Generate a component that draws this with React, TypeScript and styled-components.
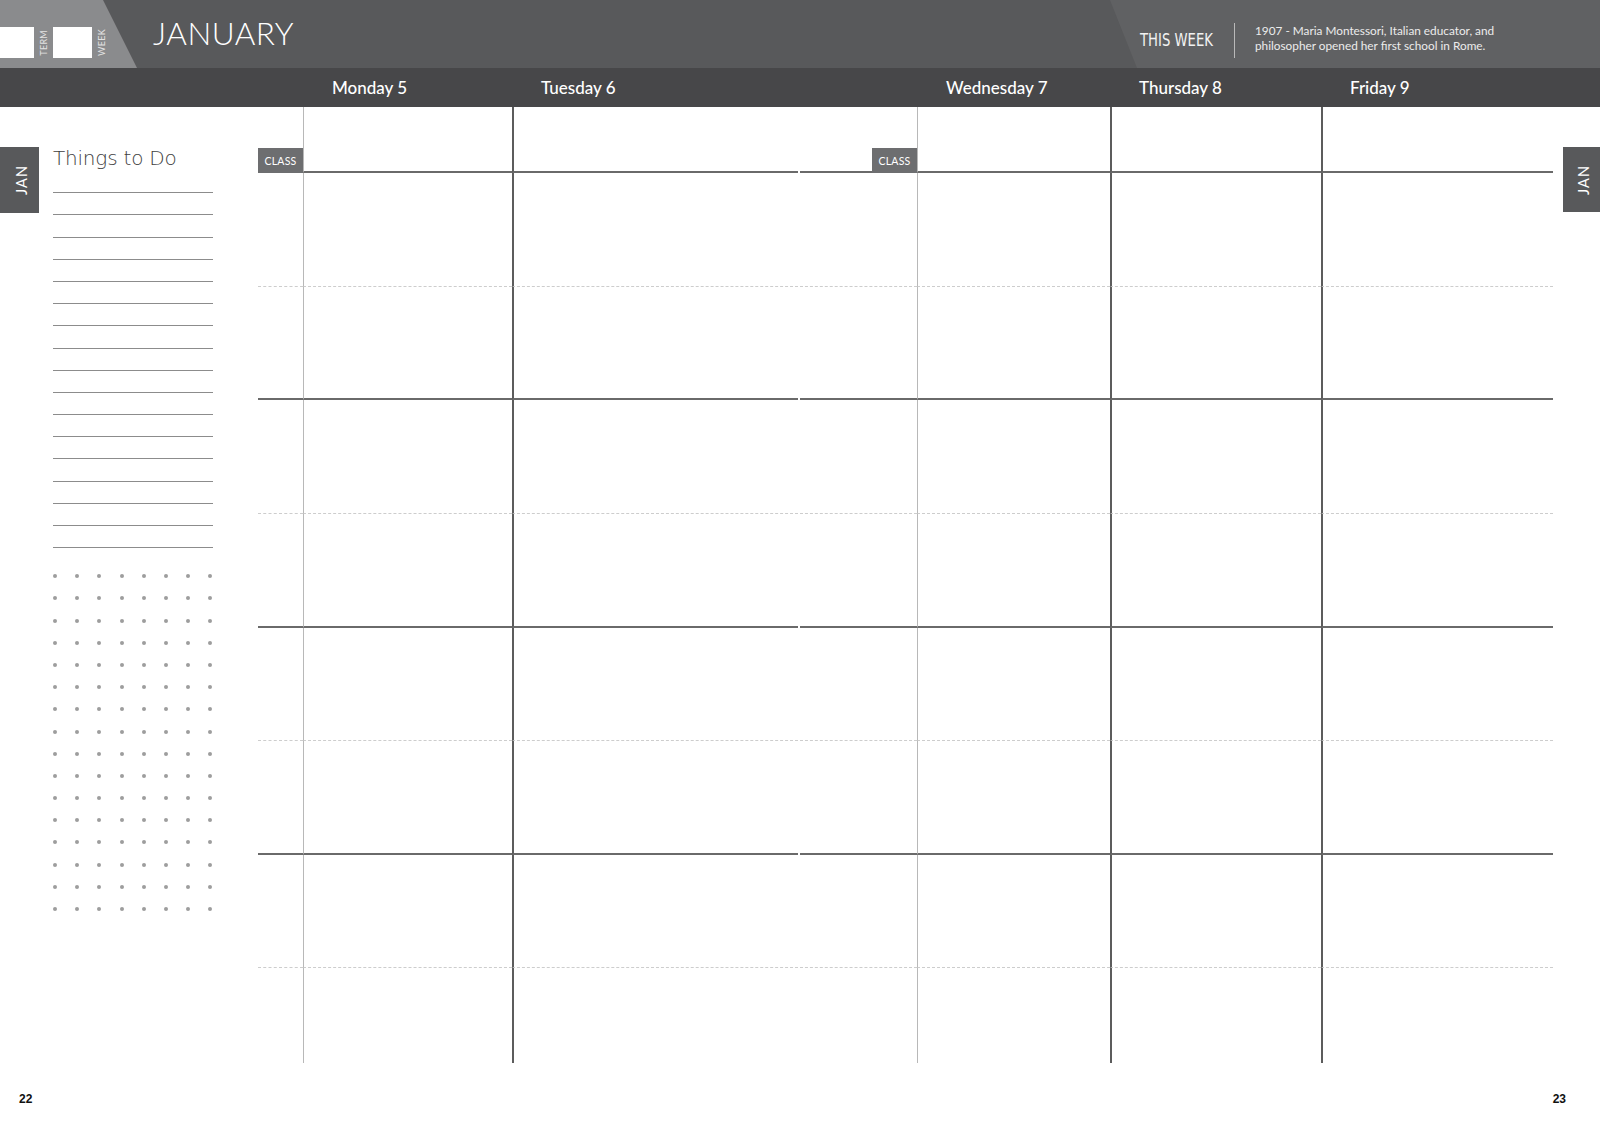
import React from "react";
import styled, { createGlobalStyle } from "styled-components";

const COLS = "45px 209px 286px 2px 117px 193px 211px 232px";
const ROWS = [66, 114, 113, 114, 114, 113, 114, 113, 95];

type Line = "none" | "light" | "dark";
type Rule = "none" | "dotted" | "solid";

const colLines: Line[] = ["none", "light", "dark", "none", "none", "light", "dark", "dark"];

const days = [
  { label: "Monday 5", col: 2 },
  { label: "Tuesday 6", col: 3 },
  { label: "Wednesday 7", col: 6 },
  { label: "Thursday 8", col: 7 },
  { label: "Friday 9", col: 8 },
];

const GlobalStyle = createGlobalStyle`
  body {
    margin: 0;
    background: #fff;
    font-family: Lato, "Open Sans", sans-serif;
  }
`;

const Page = styled.div`
  width: 1600px;
  height: 1129px;
  display: flex;
  flex-direction: column;
  background: #fff;
  overflow: hidden;
`;

const TopBar = styled.header`
  height: 68px;
  display: flex;
  align-items: center;
  background: #58595b;
`;

const TermBlock = styled.div`
  width: 137px;
  height: 100%;
  align-self: stretch;
  display: flex;
  align-items: flex-end;
  padding-bottom: 10px;
  box-sizing: border-box;
  background: #8a8b8d;
  clip-path: polygon(0 0, 103px 0, 137px 100%, 0 100%);
`;

const WhiteBox = styled.div<{ $w: number }>`
  width: ${(p) => p.$w}px;
  height: 31px;
  background: #fff;
`;

const SideLabel = styled.span`
  writing-mode: vertical-rl;
  transform: rotate(180deg);
  font-size: 9px;
  letter-spacing: 0.3px;
  color: #e2e2e2;
  margin: 0 5px 2px 5px;
  line-height: 9px;
`;

const Title = styled.h1`
  margin: -2px 0 0 16px;
  font-weight: 300;
  font-size: 31.5px;
  letter-spacing: 0.5px;
  color: #fff;
`;

const ThisWeekPanel = styled.div`
  margin-left: auto;
  width: 490px;
  height: 100%;
  align-self: stretch;
  display: flex;
  align-items: center;
  padding: 12px 0 0 30px;
  box-sizing: border-box;
  background: #606163;
  clip-path: polygon(0 0, 100% 0, 100% 100%, 27px 100%);
`;

const ThisWeek = styled.span`
  display: inline-block;
  width: 74px;
  white-space: nowrap;
  font-family: "DejaVu Sans Condensed", "Liberation Sans Narrow", sans-serif;
  font-size: 17.5px;
  color: #f2f2f2;
  transform: scaleX(0.84);
  transform-origin: left center;
`;

const Divider = styled.div`
  width: 1px;
  height: 35px;
  background: #b9b9b9;
  margin: 0 20px 0 20px;
`;

const Quote = styled.p`
  margin: -4px 0 0;
  font-size: 11.8px;
  line-height: 15px;
  color: #ececec;
`;

const DayBar = styled.div`
  height: 39px;
  background: #474749;
  display: grid;
  grid-template-columns: ${COLS};
  align-items: center;
  padding-left: 258px;
`;

const DayLabel = styled.span<{ $col: number }>`
  grid-column: ${(p) => p.$col};
  padding-left: 29px;
  font-size: 17px;
  font-weight: 500;
  color: #fff;
  white-space: nowrap;
`;

const Body = styled.div`
  display: flex;
  height: 956px;
`;

const LeftSide = styled.aside`
  width: 258px;
  display: flex;
  align-items: flex-start;
`;

const MonthTab = styled.div`
  width: 39px;
  height: 66px;
  margin-top: 40px;
  background: #58595b;
  display: flex;
  align-items: center;
  justify-content: center;
  flex-shrink: 0;
`;

const MonthText = styled.span`
  writing-mode: vertical-rl;
  transform: rotate(180deg);
  color: #fff;
  font-size: 14.5px;
  letter-spacing: 1px;
  margin-left: 4px;
`;

const TodoCol = styled.div`
  margin-left: 14px;
  width: 160px;
  padding-top: 38px;
`;

const TodoTitle = styled.div`
  height: 26px;
  font-family: "DejaVu Sans", sans-serif;
  font-weight: 200;
  font-size: 20px;
  line-height: 26px;
  color: #3e3e3e;
  letter-spacing: -0.2px;
`;

const RuleLine = styled.div`
  height: 22.2px;
  box-sizing: border-box;
  border-bottom: 1.5px solid #8c8c8c;
`;

const DotGrid = styled.div`
  margin-top: 26px;
  display: grid;
  grid-template-columns: repeat(8, 4px);
  grid-auto-rows: 4px;
  column-gap: 18.2px;
  row-gap: 18.2px;
`;

const Dot = styled.span`
  width: 4px;
  height: 4px;
  border-radius: 50%;
  background: #9d9d9d;
`;

const Schedule = styled.section`
  width: 1295px;
  display: grid;
  grid-template-columns: ${COLS};
  grid-template-rows: ${ROWS.map((r) => r + "px").join(" ")};
`;

const Cell = styled.div<{ $line: Line; $rule: Rule }>`
  box-sizing: border-box;
  display: flex;
  align-items: flex-end;
  justify-content: flex-end;
  border-left: ${(p) =>
    p.$line === "dark" ? "2px solid #5c5c5c" : p.$line === "light" ? "1px solid #b8b8b8" : "none"};
  border-bottom: ${(p) =>
    p.$rule === "solid" ? "2px solid #6a6a6a" : p.$rule === "dotted" ? "1px dashed #cdcdcd" : "none"};
`;

const ClassTag = styled.span`
  width: 45px;
  height: 25px;
  margin-bottom: -2px;
  background: #6d6e70;
  color: #fff;
  font-size: 10.5px;
  letter-spacing: 0.2px;
  display: flex;
  align-items: center;
  justify-content: center;
  padding-top: 1px;
  box-sizing: border-box;
`;

const RightTab = styled(MonthTab)`
  width: 37px;
  height: 65px;
  margin-left: 10px;
`;

const Footer = styled.footer`
  flex: 1;
  display: flex;
  justify-content: space-between;
  padding: 29px 34px 0 19px;
  font-family: "Liberation Sans", Arial, sans-serif;
  font-weight: 700;
  font-size: 12px;
  color: #111;
`;

function ruleFor(row: number, col: number): Rule {
  if (col === 3) return "none";
  if (row === 0) return "solid";
  if (row === ROWS.length - 1) return "none";
  return row % 2 === 1 ? "dotted" : "solid";
}

export default function App() {
  return (
    <Page>
      <GlobalStyle />
      <TopBar>
        <TermBlock>
          <WhiteBox $w={34} />
          <SideLabel>TERM</SideLabel>
          <WhiteBox $w={39} />
          <SideLabel>WEEK</SideLabel>
        </TermBlock>
        <Title>JANUARY</Title>
        <ThisWeekPanel>
          <ThisWeek>THIS WEEK</ThisWeek>
          <Divider />
          <Quote>
            1907 - Maria Montessori, Italian educator, and
            <br />
            philosopher opened her first school in Rome.
          </Quote>
        </ThisWeekPanel>
      </TopBar>

      <DayBar>
        {days.map((d) => (
          <DayLabel key={d.label} $col={d.col}>
            {d.label}
          </DayLabel>
        ))}
      </DayBar>

      <Body>
        <LeftSide>
          <MonthTab>
            <MonthText>JAN</MonthText>
          </MonthTab>
          <TodoCol>
            <TodoTitle>Things to Do</TodoTitle>
            {Array.from({ length: 17 }, (_, i) => (
              <RuleLine key={i} />
            ))}
            <DotGrid>
              {Array.from({ length: 128 }, (_, i) => (
                <Dot key={i} />
              ))}
            </DotGrid>
          </TodoCol>
        </LeftSide>

        <Schedule>
          {ROWS.map((_, row) =>
            colLines.map((line, col) => (
              <Cell key={`${row}-${col}`} $line={line} $rule={ruleFor(row, col)}>
                {row === 0 && (col === 0 || col === 4) && <ClassTag>CLASS</ClassTag>}
              </Cell>
            ))
          )}
        </Schedule>

        <RightTab>
          <MonthText>JAN</MonthText>
        </RightTab>
      </Body>

      <Footer>
        <span>22</span>
        <span>23</span>
      </Footer>
    </Page>
  );
}
